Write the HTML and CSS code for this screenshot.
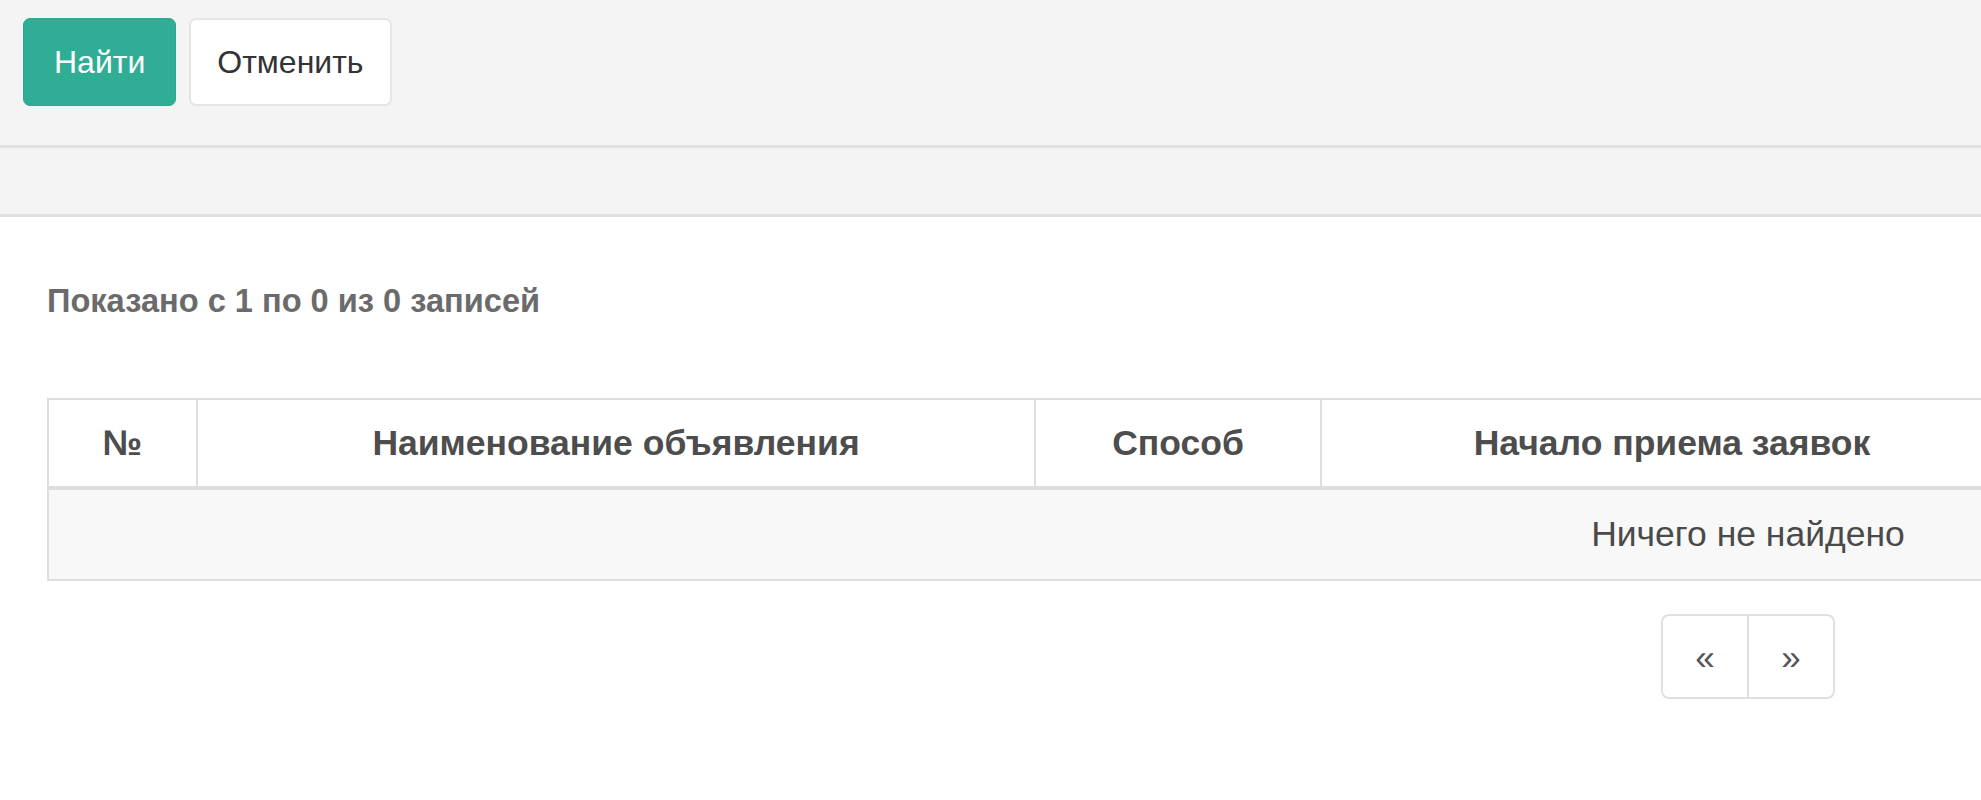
FILE: index.html
```html
<!DOCTYPE html>
<html lang="ru">
<head>
    <meta charset="UTF-8">
    <meta name="viewport" content="width=device-width, initial-scale=1.0">
    <title>Объявления</title>
    <link rel="stylesheet" href="styles.css">
</head>
<body>
    <div class="filter-panel">
        <button class="btn btn-search">Найти</button>
        <button class="btn btn-cancel">Отменить</button>
    </div>
    <div class="toolbar"></div>

    <div class="content">
        <p class="summary">Показано с 1 по 0 из 0 записей</p>

        <table class="results">
            <colgroup>
                <col class="col-num">
                <col class="col-name">
                <col class="col-method">
                <col class="col-date">
                <col class="col-date">
                <col class="col-status">
            </colgroup>
            <thead>
                <tr>
                    <th>№</th>
                    <th>Наименование объявления</th>
                    <th>Способ</th>
                    <th>Начало приема заявок</th>
                    <th></th>
                    <th></th>
                </tr>
            </thead>
            <tbody>
                <tr>
                    <td colspan="6" class="empty">Ничего не найдено</td>
                </tr>
            </tbody>
        </table>

        <div class="pager">
            <ul class="pagination">
                <li><a href="#">«</a></li>
                <li><a href="#">»</a></li>
            </ul>
        </div>
    </div>
</body>
</html>
```

FILE: styles.css
```css
/* Page */
html, body {
  overflow-x: hidden;
}

body {
  margin: 0;
  font-family: "Liberation Sans", Arial, sans-serif;
  font-size: 32px;
  color: #4d4d4d;
  background-color: #fff;
}

/* Filter panel */
.filter-panel {
  display: flex;
  gap: 13px;
  height: 127px;
  padding: 18px 0 0 23px;
  background-color: #f4f4f4;
  border-bottom: 3px solid #e2e2e2;
}

.btn {
  height: 88px;
  padding: 0 30px;
  font-family: inherit;
  font-size: 32px;
  line-height: 46px;
  border-radius: 7px;
  cursor: pointer;
}

.btn-search {
  background-color: #2fae95;
  border: 1px solid #2ba88f;
  color: #fff;
}

.btn-cancel {
  background-color: #fff;
  border: 2px solid #e6e6e6;
  color: #333;
  padding: 0 26px;
}

.toolbar {
  height: 66px;
  background-color: #f4f4f4;
  border-bottom: 3px solid #e2e2e2;
}

/* Content */
.content {
  width: 3402px;
  padding-left: 47px;
}

.summary {
  margin: 61px 0 74px;
  font-size: 32.6px;
  line-height: 46px;
  font-weight: 700;
  color: #6b6b6b;
}

/* Table */
.results {
  width: 3402px;
  table-layout: fixed;
  border-collapse: separate;
  border-spacing: 0;
  border-top: 2px solid #dedede;
  border-left: 2px solid #dedede;
  font-size: 35.5px;
}

.col-num { width: 149px; }
.col-name { width: 838px; }
.col-method { width: 286px; }
.col-date { width: 702px; }
.col-status { width: 723px; }

.results th,
.results td {
  line-height: 46px;
  text-align: center;
  border-right: 2px solid #dedede;
  white-space: nowrap;
}

.results th {
  padding: 20px 0;
  font-weight: 700;
  color: #4d4d4d;
  border-bottom: 4px solid #dedede;
}

.results td {
  padding: 21px 0 22px;
  background-color: #f8f8f8;
  color: #4a4a4a;
  border-bottom: 2px solid #dedede;
}

/* Pagination */
.pager {
  text-align: center;
  margin-top: 33px;
}

.pagination {
  display: inline-flex;
  margin: 0;
  padding: 0;
  list-style: none;
  border: 2px solid #e0e0e0;
  border-radius: 8px;
  overflow: hidden;
}

.pagination li a {
  display: block;
  width: 84px;
  height: 81px;
  line-height: 81px;
  font-size: 35px;
  text-decoration: none;
  color: #555;
}

.pagination li + li a {
  border-left: 2px solid #e0e0e0;
}
```
